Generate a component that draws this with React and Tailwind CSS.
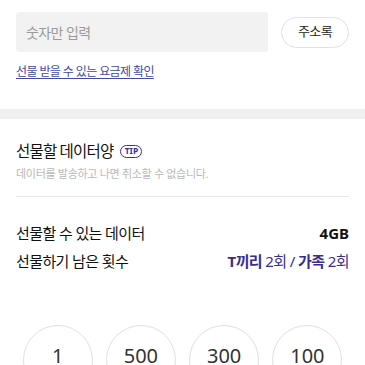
import React from 'react'

const amounts = ['1', '500', '300', '100']

export default function App() {
  return (
    <div className="min-h-screen bg-white text-[#222] tracking-[-0.6px]" style={{ fontFamily: '"Noto Sans", "Noto Sans CJK KR", sans-serif' }}>
      <div className="px-4 pt-3">
        <div className="flex items-center gap-[13px]">
          <div className="flex h-10 w-[252px] items-center rounded bg-[#f2f2f2] px-[10px] text-[14px] text-[#9a9a9a]">숫자만 입력</div>
          <button className="h-[31px] flex-1 rounded-full border border-[#e2e2e2] text-[13px] text-[#222]">주소록</button>
        </div>
        <a className="mt-[11px] block text-[12px] text-[#3e4ca3] underline underline-offset-2">선물 받을 수 있는 요금제 확인</a>
      </div>

      <div className="mt-[28px] h-[10px] bg-[#f0f0f0]" />

      <div className="px-4 pt-[22px]">
        <div className="flex items-center gap-[7px]">
          <h2 className="text-[15.5px] leading-[20px] tracking-[-0.8px] text-[#111]">선물할 데이터양</h2>
          <span className="flex h-[13px] w-[22px] items-center justify-center rounded-full border-[1.5px] border-[#3b2f99] text-[8.5px] font-bold leading-none tracking-normal text-[#3b2f99]">TIP</span>
        </div>
        <p className="mt-[5px] text-[11px] tracking-[-0.3px] text-[#b8b8b8]">데이터를 발송하고 나면 취소할 수 없습니다.</p>
        <div className="mt-[13px] h-px bg-[#e8e8e8]" />

        <div className="mt-[27px] flex items-center justify-between text-[15px] leading-[18px]">
          <span className="text-[#111]">선물할 수 있는 데이터</span>
          <span className="font-bold tracking-normal text-[#111]">4GB</span>
        </div>
        <div className="mt-[10px] flex items-center justify-between text-[15px] leading-[18px]">
          <span className="text-[#111]">선물하기 남은 횟수</span>
          <span className="text-[#3a2d8f]">
            <b>T끼리</b> 2회 / <b>가족</b> 2회
          </span>
        </div>

        <div className="mt-[55px] grid grid-cols-4">
          {amounts.map((a) => (
            <div key={a} className="flex justify-center">
              <div className="flex h-[70px] w-[70px] items-center justify-center rounded-full border border-[#e0e0e0] pb-[8px] text-[20px] tracking-normal text-[#333]">
                {a}
              </div>
            </div>
          ))}
        </div>
      </div>
    </div>
  )
}
